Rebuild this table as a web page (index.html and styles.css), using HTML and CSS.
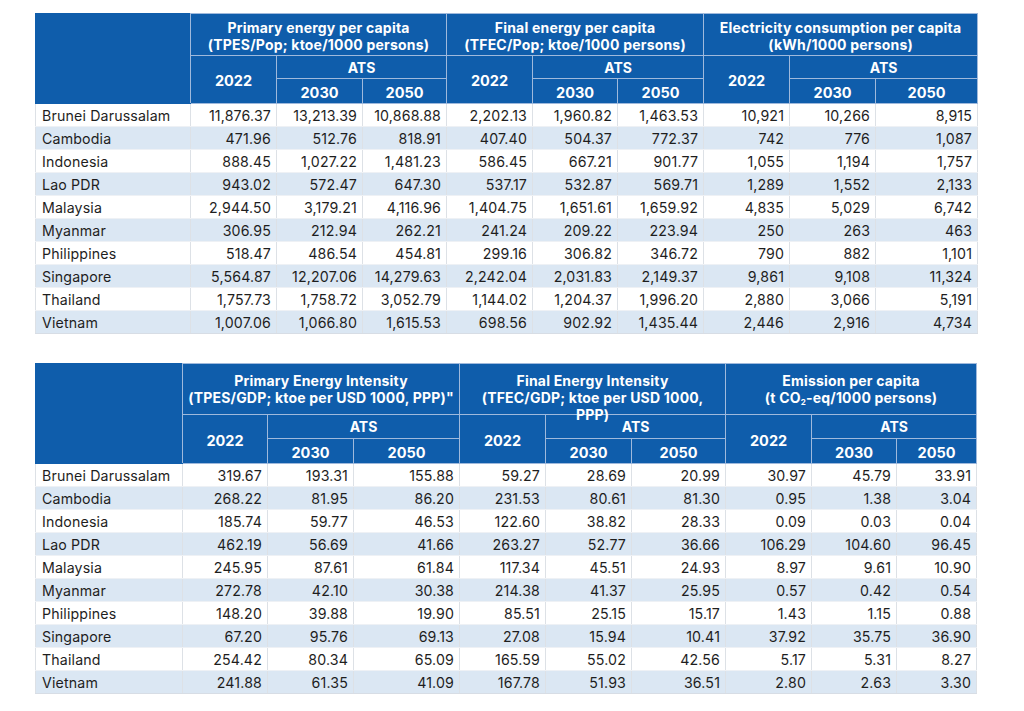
FILE: index.html
```html
<!DOCTYPE html>
<html lang="en">
<head>
<meta charset="utf-8">
<title>Energy indicators</title>
<link rel="stylesheet" href="styles.css">
</head>
<body>
<main class="page">
  <table class="grid t1">
    <colgroup>
      <col class="w155"><col class="w86"><col class="w86"><col class="w84"><col class="w86"><col class="w85"><col class="w86"><col class="w86"><col class="w86"><col class="w102">
    </colgroup>
    <thead>
      <tr class="h-top">
        <th rowspan="3" class="blank"></th>
        <th colspan="3"><div class="ttl">Primary energy per capita<br>(TPES/Pop; ktoe/1000 persons)</div></th>
        <th colspan="3"><div class="ttl">Final energy per capita<br>(TFEC/Pop; ktoe/1000 persons)</div></th>
        <th colspan="3"><div class="ttl">Electricity consumption per capita<br>(kWh/1000 persons)</div></th>
      </tr>
      <tr class="h-ats">
        <th rowspan="2" class="yr">2022</th><th colspan="2">ATS</th>
        <th rowspan="2" class="yr">2022</th><th colspan="2">ATS</th>
        <th rowspan="2" class="yr">2022</th><th colspan="2">ATS</th>
      </tr>
      <tr class="h-yr">
        <th>2030</th><th>2050</th>
        <th>2030</th><th>2050</th>
        <th>2030</th><th>2050</th>
      </tr>
    </thead>
    <tbody>
      <tr><td>Brunei Darussalam</td><td>11,876.37</td><td>13,213.39</td><td>10,868.88</td><td>2,202.13</td><td>1,960.82</td><td>1,463.53</td><td>10,921</td><td>10,266</td><td>8,915</td></tr>
      <tr><td>Cambodia</td><td>471.96</td><td>512.76</td><td>818.91</td><td>407.40</td><td>504.37</td><td>772.37</td><td>742</td><td>776</td><td>1,087</td></tr>
      <tr><td>Indonesia</td><td>888.45</td><td>1,027.22</td><td>1,481.23</td><td>586.45</td><td>667.21</td><td>901.77</td><td>1,055</td><td>1,194</td><td>1,757</td></tr>
      <tr><td>Lao PDR</td><td>943.02</td><td>572.47</td><td>647.30</td><td>537.17</td><td>532.87</td><td>569.71</td><td>1,289</td><td>1,552</td><td>2,133</td></tr>
      <tr><td>Malaysia</td><td>2,944.50</td><td>3,179.21</td><td>4,116.96</td><td>1,404.75</td><td>1,651.61</td><td>1,659.92</td><td>4,835</td><td>5,029</td><td>6,742</td></tr>
      <tr><td>Myanmar</td><td>306.95</td><td>212.94</td><td>262.21</td><td>241.24</td><td>209.22</td><td>223.94</td><td>250</td><td>263</td><td>463</td></tr>
      <tr><td>Philippines</td><td>518.47</td><td>486.54</td><td>454.81</td><td>299.16</td><td>306.82</td><td>346.72</td><td>790</td><td>882</td><td>1,101</td></tr>
      <tr><td>Singapore</td><td>5,564.87</td><td>12,207.06</td><td>14,279.63</td><td>2,242.04</td><td>2,031.83</td><td>2,149.37</td><td>9,861</td><td>9,108</td><td>11,324</td></tr>
      <tr><td>Thailand</td><td>1,757.73</td><td>1,758.72</td><td>3,052.79</td><td>1,144.02</td><td>1,204.37</td><td>1,996.20</td><td>2,880</td><td>3,066</td><td>5,191</td></tr>
      <tr><td>Vietnam</td><td>1,007.06</td><td>1,066.80</td><td>1,615.53</td><td>698.56</td><td>902.92</td><td>1,435.44</td><td>2,446</td><td>2,916</td><td>4,734</td></tr>
    </tbody>
  </table>

  <table class="grid t2">
    <colgroup>
      <col class="w147"><col class="w85"><col class="w86"><col class="w106"><col class="w86"><col class="w86"><col class="w94"><col class="w86"><col class="w85"><col class="w80">
    </colgroup>
    <thead>
      <tr class="h-top">
        <th rowspan="3" class="blank"></th>
        <th colspan="3"><div class="ttl">Primary Energy Intensity<br>(TPES/GDP; ktoe per USD 1000, PPP)"</div></th>
        <th colspan="3"><div class="ttl">Final Energy Intensity<br>(TFEC/GDP; ktoe per USD 1000,<br>PPP)</div></th>
        <th colspan="3"><div class="ttl">Emission per capita<br>(t CO<sub>2</sub>-eq/1000 persons)</div></th>
      </tr>
      <tr class="h-ats">
        <th rowspan="2" class="yr">2022</th><th colspan="2">ATS</th>
        <th rowspan="2" class="yr">2022</th><th colspan="2">ATS</th>
        <th rowspan="2" class="yr">2022</th><th colspan="2">ATS</th>
      </tr>
      <tr class="h-yr">
        <th>2030</th><th>2050</th>
        <th>2030</th><th>2050</th>
        <th>2030</th><th>2050</th>
      </tr>
    </thead>
    <tbody>
      <tr><td>Brunei Darussalam</td><td>319.67</td><td>193.31</td><td>155.88</td><td>59.27</td><td>28.69</td><td>20.99</td><td>30.97</td><td>45.79</td><td>33.91</td></tr>
      <tr><td>Cambodia</td><td>268.22</td><td>81.95</td><td>86.20</td><td>231.53</td><td>80.61</td><td>81.30</td><td>0.95</td><td>1.38</td><td>3.04</td></tr>
      <tr><td>Indonesia</td><td>185.74</td><td>59.77</td><td>46.53</td><td>122.60</td><td>38.82</td><td>28.33</td><td>0.09</td><td>0.03</td><td>0.04</td></tr>
      <tr><td>Lao PDR</td><td>462.19</td><td>56.69</td><td>41.66</td><td>263.27</td><td>52.77</td><td>36.66</td><td>106.29</td><td>104.60</td><td>96.45</td></tr>
      <tr><td>Malaysia</td><td>245.95</td><td>87.61</td><td>61.84</td><td>117.34</td><td>45.51</td><td>24.93</td><td>8.97</td><td>9.61</td><td>10.90</td></tr>
      <tr><td>Myanmar</td><td>272.78</td><td>42.10</td><td>30.38</td><td>214.38</td><td>41.37</td><td>25.95</td><td>0.57</td><td>0.42</td><td>0.54</td></tr>
      <tr><td>Philippines</td><td>148.20</td><td>39.88</td><td>19.90</td><td>85.51</td><td>25.15</td><td>15.17</td><td>1.43</td><td>1.15</td><td>0.88</td></tr>
      <tr><td>Singapore</td><td>67.20</td><td>95.76</td><td>69.13</td><td>27.08</td><td>15.94</td><td>10.41</td><td>37.92</td><td>35.75</td><td>36.90</td></tr>
      <tr><td>Thailand</td><td>254.42</td><td>80.34</td><td>65.09</td><td>165.59</td><td>55.02</td><td>42.56</td><td>5.17</td><td>5.31</td><td>8.27</td></tr>
      <tr><td>Vietnam</td><td>241.88</td><td>61.35</td><td>41.09</td><td>167.78</td><td>51.93</td><td>36.51</td><td>2.80</td><td>2.63</td><td>3.30</td></tr>
    </tbody>
  </table>
</main>
</body>
</html>
```

FILE: styles.css
```css
html, body {
  margin: 0;
  padding: 0;
  background: #ffffff;
}

.page {
  display: flex;
  flex-direction: column;
  align-items: flex-start;
  gap: 29px;
  padding: 13px 0 0 35px;
  font-family: Inter, "Noto Sans", "Liberation Sans", sans-serif;
  color: #1e1e1e;
}

.grid {
  border-collapse: collapse;
  table-layout: fixed;
  font-size: 14px;
}

.t1 { width: 942px; }
.t2 { width: 941px; }

.w155 { width: 155px; }
.w147 { width: 147px; }
.w106 { width: 106px; }
.w102 { width: 102px; }
.w94 { width: 94px; }
.w86 { width: 86px; }
.w85 { width: 85px; }
.w84 { width: 84px; }
.w80 { width: 80px; }

.grid th {
  background: #0f5dab;
  color: #ffffff;
  font-weight: 700;
  font-size: 14px;
  text-align: center;
  border: 1px solid #9fb9dc;
  padding: 0;
  line-height: 17px;
  vertical-align: middle;
}

.grid th.blank {
  border-color: #0f5dab;
  border-right-color: #9fb9dc;
}

.grid .ttl {
  letter-spacing: 0.2px;
}

.t1 .h-top th { height: 41px; }
.t1 .h-top .ttl { padding-top: 3px; }
.t1 .h-ats th { height: 22px; }
.t1 .h-yr th { height: 22px; }

.t2 .h-top th { height: 50px; vertical-align: top; }
.t2 .h-top th.blank { vertical-align: middle; }
.t2 .h-top .ttl { height: 36px; padding-top: 8px; }
.t2 .h-ats th { height: 23px; }
.t2 .h-yr th { height: 22px; }

.grid .yr { font-size: 14.5px; padding-top: 2px; }
.h-yr th { font-size: 14.5px; padding-top: 2px; }

.grid sub {
  font-size: 8px;
  line-height: 0;
  vertical-align: -2px;
}

.grid td {
  height: 22px;
  padding: 0 5px 0 6px;
  text-align: right;
  border-left: 1px solid #dde1e6;
  border-right: 1px solid #dde1e6;
  border-bottom: 1px solid #eef1f5;
  white-space: nowrap;
  line-height: 17px;
  font-size: 14.2px;
  letter-spacing: 0.15px;
}

.grid td:first-child {
  text-align: left;
  padding-left: 6px;
}

.grid tbody tr:nth-child(even) td {
  background: #dbe7f3;
}

.t1 tbody tr:last-child td,
.t2 tbody tr:last-child td {
  border-bottom: 1px solid #d7dde5;
}
```
